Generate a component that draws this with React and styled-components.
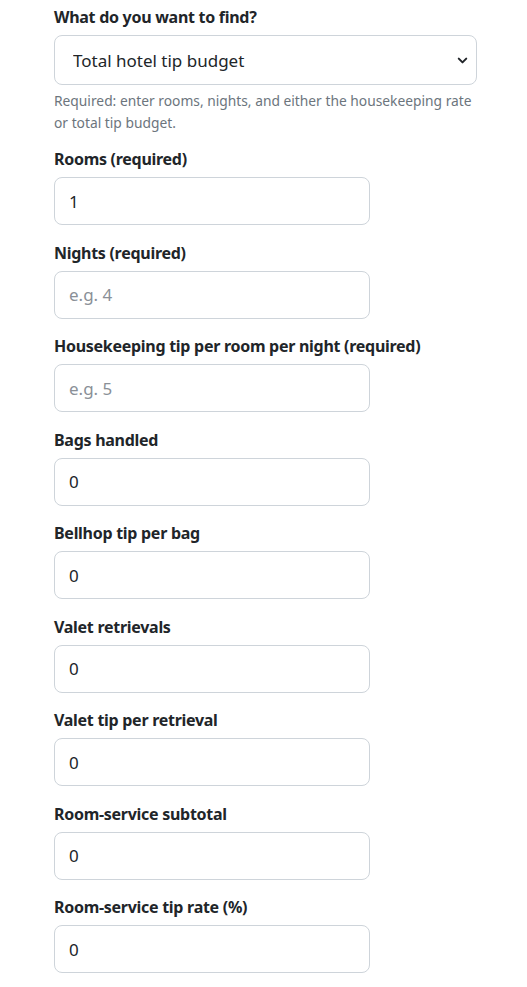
import React from 'react';
import styled, { createGlobalStyle } from 'styled-components';
import { ChevronDown } from 'lucide-react';

const GlobalStyle = createGlobalStyle`
  body {
    margin: 0;
    background: #fff;
    font-family: 'Noto Sans', 'Open Sans', sans-serif;
    color: #212529;
  }
`;

const fields = [
  { id: 'rooms', label: 'Rooms (required)', value: '1' },
  { id: 'nights', label: 'Nights (required)', placeholder: 'e.g. 4' },
  { id: 'hk', label: 'Housekeeping tip per room per night (required)', placeholder: 'e.g. 5' },
  { id: 'bags', label: 'Bags handled', value: '0' },
  { id: 'bellhop', label: 'Bellhop tip per bag', value: '0' },
  { id: 'valet', label: 'Valet retrievals', value: '0' },
  { id: 'valetTip', label: 'Valet tip per retrieval', value: '0' },
  { id: 'rs', label: 'Room-service subtotal', value: '0' },
  { id: 'rsRate', label: 'Room-service tip rate (%)', value: '0' },
];

const App = () => {
  return (
    <>
      <GlobalStyle />
      <Form>
        <Field>
          <Label htmlFor="find">What do you want to find?</Label>
          <SelectWrap>
            <Select id="find" defaultValue="budget">
              <option value="budget">Total hotel tip budget</option>
              <option value="rate">Housekeeping tip per night</option>
            </Select>
            <Chevron size={15} strokeWidth={3.2} />
          </SelectWrap>
          <Help>Required: enter rooms, nights, and either the housekeeping rate or total tip budget.</Help>
        </Field>
        {fields.map((f) => (
          <Field key={f.id}>
            <Label htmlFor={f.id}>{f.label}</Label>
            <Input id={f.id} type="text" defaultValue={f.value} placeholder={f.placeholder} />
          </Field>
        ))}
      </Form>
    </>
  );
};

export default App;

const Form = styled.form`
  display: flex;
  flex-direction: column;
  padding: 5px 0 0 54px;
  width: 423px;
`;

const Field = styled.div`
  display: flex;
  flex-direction: column;
  margin-bottom: 15.5px;
`;

const Label = styled.label`
  font-size: 16px;
  line-height: 24px;
  font-weight: 700;
  letter-spacing: -0.28px;
  color: #212529;
  margin-bottom: 6px;
`;

const SelectWrap = styled.div`
  position: relative;
  width: 423px;
`;

const Select = styled.select`
  appearance: none;
  width: 100%;
  height: 50px;
  box-sizing: border-box;
  padding: 0 40px 0 18px;
  border: 1px solid #ced4da;
  border-radius: 8px;
  background: #fff;
  font-family: inherit;
  font-size: 17px;
  color: #212529;
`;

const Chevron = styled(ChevronDown)`
  position: absolute;
  right: 7px;
  top: 18px;
  color: #212529;
  pointer-events: none;
`;

const Help = styled.p`
  margin: 5px 0 -2.5px;
  font-size: 13.8px;
  line-height: 22px;
  color: #6c757d;
`;

const Input = styled.input`
  width: 316px;
  height: 48px;
  box-sizing: border-box;
  padding: 0 14px;
  border: 1px solid #ced4da;
  border-radius: 8px;
  background: #fff;
  font-family: inherit;
  font-size: 17px;
  color: #212529;

  &::placeholder {
    color: #8a9097;
  }
`;
